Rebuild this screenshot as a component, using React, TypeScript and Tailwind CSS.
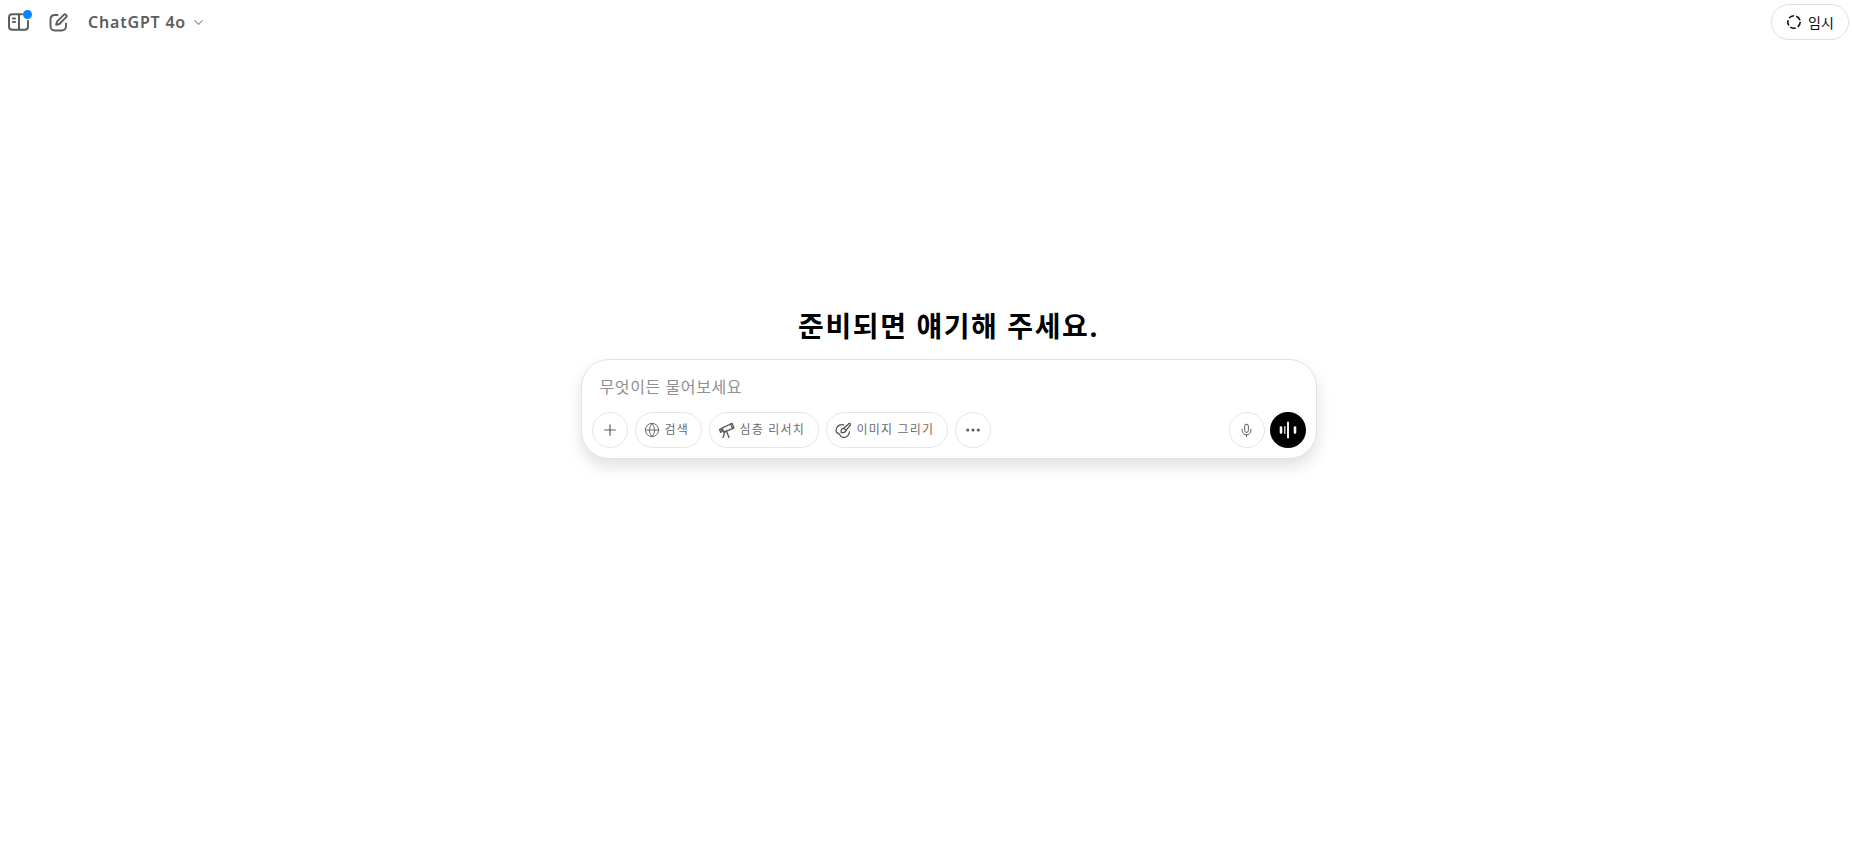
import { ChevronDown, Ellipsis, Globe, Mic, Plus } from 'lucide-react';

function Pill({ icon, label, width }: { icon: React.ReactNode; label: string; width: string }) {
  return (
    <button className={`flex h-[36px] items-center gap-[5px] rounded-full border border-[#e5e5e5] pl-[8px] text-[12px] tracking-[1.2px] text-[#6b6b6b] ${width}`}>
      {icon}
      <span>{label}</span>
    </button>
  );
}

function RoundButton({ children }: { children: React.ReactNode }) {
  return (
    <button className="flex h-[36px] w-[36px] items-center justify-center rounded-full border border-[#e5e5e5] text-[#5d5d5d]">
      {children}
    </button>
  );
}

function TelescopeIcon() {
  return (
    <svg width="17" height="17" viewBox="0 0 17 17" fill="none" stroke="#555" strokeWidth="1.3" strokeLinejoin="round" strokeLinecap="round">
      <path d="M1.500 7.500 3 6.700l1.300 2.800-1.600.8z" />
      <path d="M4 6.200 12.600 2l2 4.600-9 3.500z" />
      <path d="M12.600 2l1.600-.6 1.600 4.400-1.200.6" />
      <path d="M7 9.500 5 15.500M8.500 9.200 11 15.500" />
    </svg>
  );
}

function BrushIcon() {
  return (
    <svg width="17" height="17" viewBox="0 0 17 17" fill="none" stroke="#555" strokeWidth="1.3" strokeLinejoin="round" strokeLinecap="round">
      <path d="M8.500 2.800C4.800 2 1 4.600 1 8.400c0 2.600 2 3 3 3.400 1.200.5.800 3.700 3.900 3.700 3.200 0 6-2.200 6.600-5.500" />
      <path d="M14 1.500c1-.4 1.800.4 1.400 1.400l-4.400 5.400-2.200-2z" />
      <path d="M8.800 6.300C6.800 6.300 5.800 8 6.200 10.500c2.400.3 4.500-.6 4.800-2.200" />
    </svg>
  );
}

export default function App() {
  return (
    <div className="flex h-screen flex-col bg-white font-['Noto_Sans','Noto_Sans_CJK_KR',sans-serif]">
      <header className="flex h-[44px] items-center justify-between pl-[8px] pr-[3px]">
        <div className="flex items-center">
          <div className="relative h-[22px] w-[22px] text-[#5d5d5d]">
            <svg width="22" height="22" viewBox="0 0 22 22" fill="none" stroke="currentColor" strokeWidth="2" strokeLinecap="round">
              <path d="M20 10v5.500c0 2-1.300 3.300-3.300 3.300H4.300C2.300 18.800 1 17.500 1 15.500V6.500c0-2 1.300-3.300 3.300-3.300H14" />
              <path d="M11 3.500v15" />
              <path d="M5 7.500h2M5 11h2" />
            </svg>
            <span className="absolute right-[-2px] top-[-1px] h-[9px] w-[9px] rounded-full bg-[#0285ff]" />
          </div>
          <svg className="ml-[19px] text-[#5d5d5d]" width="19" height="19" viewBox="0 0 19 19" fill="none" stroke="currentColor" strokeWidth="1.9" strokeLinecap="round" strokeLinejoin="round">
            <path d="M8.500 2H6C3.500 2 1.500 3.600 1.500 6.500v6.500c0 2.500 1.700 4.500 4.500 4.500h6.500c2.800 0 4.500-2 4.500-4.500v-2.500" />
            <path d="M14.800 1.800 8 8.600l-.8 3.200 3.200-.8 6.800-6.800a1.700 1.700 0 0 0-2.400-2.400z" />
          </svg>
          <span className="ml-[20px] text-[16px] font-semibold tracking-[0.8px] text-[#5d5d5d]">ChatGPT 4o</span>
          <ChevronDown className="ml-[5px] h-[15px] w-[15px] text-[#8f8f8f]" strokeWidth={1.8} />
        </div>
        <button className="flex h-[36px] w-[78px] items-center justify-center gap-[6px] rounded-full border border-[#e0e0e0] text-[14px] text-[#0d0d0d]">
          <svg width="16" height="16" viewBox="0 0 16 16" fill="none" stroke="currentColor" strokeWidth="1.600">
            <circle cx="8" cy="8" r="6.200" strokeDasharray="5.500 2.200" />
          </svg>
          <span>임시</span>
        </button>
      </header>

      <main className="flex flex-col items-center pl-[45px] pt-[261px]">
        <h1 className="h-[54px] text-[28px] font-bold leading-[42px] tracking-[1.6px] text-black">
          준비되면 얘기해 주세요.
        </h1>
        <div className="flex h-[100px] w-[736px] flex-col rounded-[28px] border border-[#e2e2e2] bg-white shadow-[0_8px_16px_rgba(0,0,0,0.12)]">
          <div className="pl-[18px] pt-[15px] text-[16px] leading-[24px] tracking-[0.6px] text-[#8f8f8f]">
            무엇이든 물어보세요
          </div>
          <div className="mt-[13px] flex items-center justify-between px-[10px]">
            <div className="flex items-center gap-[7px]">
              <RoundButton>
                <Plus className="h-[18px] w-[18px]" strokeWidth={1.6} />
              </RoundButton>
              <Pill icon={<Globe className="h-[16px] w-[16px]" strokeWidth={1.5} />} label="검색" width="w-[67px]" />
              <Pill icon={<TelescopeIcon />} label="심층 리서치" width="w-[110px]" />
              <Pill icon={<BrushIcon />} label="이미지 그리기" width="w-[122px]" />
              <RoundButton>
                <Ellipsis className="h-[18px] w-[18px]" strokeWidth={2.2} />
              </RoundButton>
            </div>
            <div className="flex items-center gap-[5px]">
              <RoundButton>
                <Mic className="h-[15px] w-[15px]" strokeWidth={1.6} />
              </RoundButton>
              <button className="flex h-[36px] w-[36px] items-center justify-center rounded-full bg-black">
                <svg width="20" height="20" viewBox="0 0 20 20" fill="none" stroke="white" strokeLinecap="round">
                  <path d="M3 7.500v5M17 7.500v5" strokeWidth="2.600" />
                  <path d="M6.800 6.500v7" strokeWidth="1.200" />
                  <path d="M10 2.500v15" strokeWidth="1.900" />
                </svg>
              </button>
            </div>
          </div>
        </div>
      </main>
    </div>
  );
}
